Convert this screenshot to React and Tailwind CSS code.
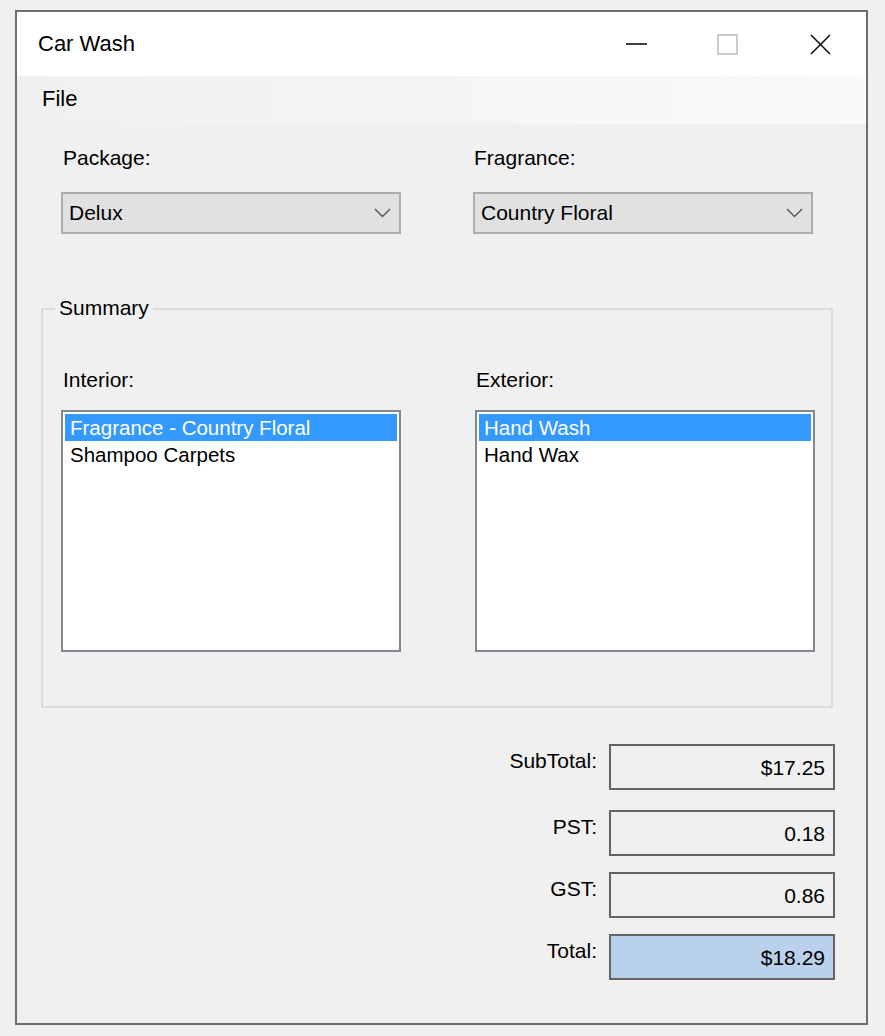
import { useState } from "react";

const font = { fontFamily: '"Liberation Sans", Arial, sans-serif' };

const Chevron = () => (
  <svg width="17" height="10" viewBox="0 0 17 10" fill="none">
    <polyline points="1,1 8.5,8.5 16,1" stroke="#555" strokeWidth="1.4" />
  </svg>
);

const ComboBox = ({ value }) => (
  <div className="flex h-[42px] w-[340px] items-center justify-between border-2 border-[#adadad] bg-[#e1e1e1] pl-[6px] pr-[8px] text-[21px] leading-[24px] text-black">
    <span>{value}</span>
    <Chevron />
  </div>
);

const ListBox = ({ items, selected }) => (
  <div className="h-[242px] w-[340px] border-2 border-[#828790] bg-white p-[2px]">
    {items.map((item, i) => (
      <div
        key={item}
        className={
          i === selected
            ? "h-[27px] bg-[#3399ff] pl-[5px] text-[20.5px] leading-[27px] text-white"
            : "h-[27px] pl-[5px] text-[20.5px] leading-[27px] text-black"
        }
      >
        {item}
      </div>
    ))}
  </div>
);

const TotalRow = ({ label, value, highlight, className }) => (
  <div className={"flex items-start justify-end " + className}>
    <span className="pt-[5px] text-[21px] leading-[24px] text-black">{label}</span>
    <div
      className={
        "ml-[12px] flex h-[46px] w-[226px] items-center justify-end border-2 border-[#646464] pr-[8px] pt-[2px] text-[21px] leading-[24px] text-black " +
        (highlight ? "bg-[#b9d1ea]" : "bg-[#f0f0f0]")
      }
    >
      {value}
    </div>
  </div>
);

export default function App() {
  const [pkg] = useState("Delux");
  const [fragrance] = useState("Country Floral");

  return (
    <div className="min-h-screen bg-[#f0f0f0] pl-[15px] pt-[10px]" style={font}>
      <div className="flex h-[1015px] w-[853px] flex-col border-2 border-[#6e6e6e] bg-[#f0f0f0]">
        {/* title bar */}
        <div className="flex h-[64px] shrink-0 items-center bg-white">
          <span className="flex-1 pl-[21px] text-[22px] leading-[26px] text-black">Car Wash</span>
          <div className="flex h-full w-[90px] items-center justify-center">
            <svg width="21" height="4" viewBox="0 0 21 4">
              <line x1="0" y1="2" x2="21" y2="2" stroke="#000" strokeWidth="1.5" />
            </svg>
          </div>
          <div className="flex h-full w-[93px] items-center justify-center">
            <svg width="21" height="21" viewBox="0 0 21 21">
              <rect x="1" y="1" width="19" height="19" fill="none" stroke="#cccccc" strokeWidth="2" />
            </svg>
          </div>
          <div className="flex h-full w-[92px] items-center justify-center">
            <svg width="21" height="21" viewBox="0 0 21 21">
              <path d="M1 1 L20 20 M20 1 L1 20" stroke="#111" strokeWidth="1.6" />
            </svg>
          </div>
        </div>

        {/* menu bar */}
        <div className="flex h-[48px] shrink-0 items-center bg-gradient-to-r from-[#f0f0f0] to-[#fafafa] pl-[25px] pb-[2px]">
          <span className="text-[22px] leading-[26px] text-black">File</span>
        </div>

        {/* content */}
        <div className="flex flex-1 flex-col pt-[22px]">
          <div className="flex pl-[44px]">
            <div className="flex w-[340px] flex-col">
              <span className="ml-[2px] text-[21px] leading-[24px] text-black">Package:</span>
              <div className="mt-[22px]">
                <ComboBox value={pkg} />
              </div>
            </div>
            <div className="ml-[72px] flex w-[340px] flex-col">
              <span className="ml-[1px] text-[21px] leading-[24px] text-black">Fragrance:</span>
              <div className="mt-[22px]">
                <ComboBox value={fragrance} />
              </div>
            </div>
          </div>

          {/* summary group */}
          <div className="relative ml-[24px] mt-[74px] w-[792px] border-2 border-[#dcdcdc] pl-[18px] pt-[58px] pb-[54px]">
            <span className="absolute -top-[14px] left-[12px] bg-[#f0f0f0] px-[4px] text-[21px] leading-[24px] text-black">
              Summary
            </span>
            <div className="flex">
              <div className="flex flex-col">
                <span className="ml-[2px] text-[21px] leading-[24px] text-black">Interior:</span>
                <div className="mt-[18px]">
                  <ListBox items={["Fragrance - Country Floral", "Shampoo Carpets"]} selected={0} />
                </div>
              </div>
              <div className="ml-[74px] flex flex-col">
                <span className="ml-[1px] text-[21px] leading-[24px] text-black">Exterior:</span>
                <div className="mt-[18px]">
                  <ListBox items={["Hand Wash", "Hand Wax"]} selected={0} />
                </div>
              </div>
            </div>
          </div>

          {/* totals */}
          <div className="flex flex-col pr-[31px]">
            <TotalRow label="SubTotal:" value="$17.25" className="mt-[36px]" />
            <TotalRow label="PST:" value="0.18" className="mt-[20px]" />
            <TotalRow label="GST:" value="0.86" className="mt-[16px]" />
            <TotalRow label="Total:" value="$18.29" highlight className="mt-[16px]" />
          </div>
        </div>
      </div>
    </div>
  );
}
